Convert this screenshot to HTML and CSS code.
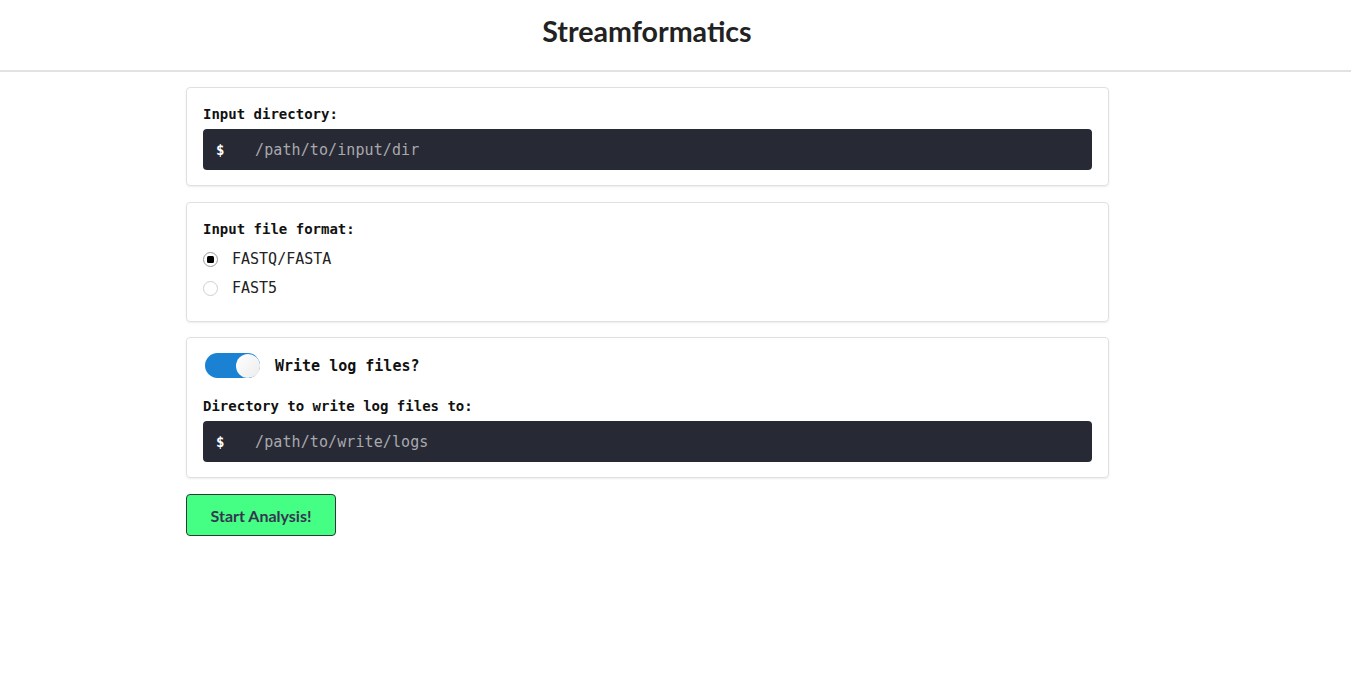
FILE: index.html
```html
<!DOCTYPE html>
<html lang="en">
<head>
<meta charset="utf-8">
<title>Streamformatics</title>
<link rel="stylesheet" href="styles.css">
</head>
<body>
<header class="topbar">
  <h1 class="title">Streamformatics</h1>
</header>
<main class="container">
  <section class="card">
    <div class="label">Input directory:</div>
    <div class="term">
      <span class="prompt">$</span>
      <span class="path">/path/to/input/dir</span>
    </div>
  </section>
  <section class="card card-radio">
    <div class="label">Input file format:</div>
    <div class="radios">
      <label class="radio"><span class="dot checked"></span><span>FASTQ/FASTA</span></label>
      <label class="radio"><span class="dot"></span><span>FAST5</span></label>
    </div>
  </section>
  <section class="card card-log">
    <div class="toggle-row">
      <span class="toggle"><span class="knob"></span></span>
      <span class="toggle-label">Write log files?</span>
    </div>
    <div class="label">Directory to write log files to:</div>
    <div class="term">
      <span class="prompt">$</span>
      <span class="path">/path/to/write/logs</span>
    </div>
  </section>
  <div class="actions">
    <button class="start">Start Analysis!</button>
  </div>
</main>
</body>
</html>
```
FILE: styles.css
```css
* { box-sizing: border-box; }
html, body { margin: 0; padding: 0; background: #fff; }
body { font-family: "Lato", "Liberation Sans", sans-serif; color: #222; }

.topbar {
  height: 72px;
  border-bottom: 2px solid #e2e2e2;
  display: flex;
  align-items: center;
  justify-content: center;
}
.title {
  margin: 0;
  margin-left: -57px;
  margin-top: -8px;
  font-family: "Lato", sans-serif;
  font-weight: 700;
  font-size: 28.6px;
  color: #222;
}

.container {
  width: 923px;
  margin-left: 186px;
  padding-top: 15px;
  display: flex;
  flex-direction: column;
  gap: 16px;
}

.card {
  border: 1px solid #e0e0e0;
  border-radius: 4px;
  box-shadow: 0 1px 2px rgba(0,0,0,0.08);
  padding: 17px 16px 15px 16px;
}
.card-radio { padding-bottom: 24px; }
.card-log { padding-top: 15px; margin-top: -1px; }

.label {
  font-family: "DejaVu Sans Mono", "Liberation Mono", monospace;
  font-weight: 700;
  font-size: 14px;
  color: #111;
  line-height: 18px;
  margin-bottom: 6px;
}

.term {
  background: #272935;
  border-radius: 4px;
  height: 41px;
  display: flex;
  align-items: center;
  padding-left: 13px;
  font-family: "DejaVu Sans Mono", "Liberation Mono", monospace;
  font-size: 15px;
}
.prompt { color: #fff; font-weight: 700; width: 39px; font-size: 14px; }
.path { color: #a9a9ad; letter-spacing: 0.1px; }

.radios { display: flex; flex-direction: column; gap: 11px; margin-top: 12px; }
.radio {
  display: flex;
  align-items: center;
  gap: 14px;
  font-family: "DejaVu Sans Mono", "Liberation Mono", monospace;
  font-size: 15px;
  color: #222;
  line-height: 18px;
  height: 18px;
}
.dot {
  width: 15px;
  height: 15px;
  border-radius: 50%;
  border: 1px solid #cfcfcf;
  display: flex;
  align-items: center;
  justify-content: center;
  background: #fff;
}
.dot.checked { border-color: #999; }
.dot.checked::after {
  content: "";
  width: 7px;
  height: 7px;
  border-radius: 1.5px;
  background: #000;
}

.toggle-row { display: flex; align-items: center; gap: 15px; margin-bottom: 19px; padding-left: 2px; height: 25px; }
.toggle {
  width: 55px;
  height: 25px;
  border-radius: 13px;
  background: #1b82d3;
  display: flex;
  justify-content: flex-end;
  align-items: center;
}
.knob {
  width: 24px;
  height: 24px;
  border-radius: 50%;
  background: linear-gradient(135deg, #ffffff, #ececec);
}
.toggle-label {
  font-family: "DejaVu Sans Mono", "Liberation Mono", monospace;
  font-weight: 700;
  font-size: 15px;
  color: #111;
}

.actions { display: flex; }
.start {
  width: 150px;
  height: 42px;
  background: #45fe84;
  border: 1px solid #2f3a33;
  border-radius: 4px;
  font-family: "Lato", sans-serif;
  font-weight: 700;
  font-size: 16px;
  color: #363650;
  cursor: pointer;
}
```
